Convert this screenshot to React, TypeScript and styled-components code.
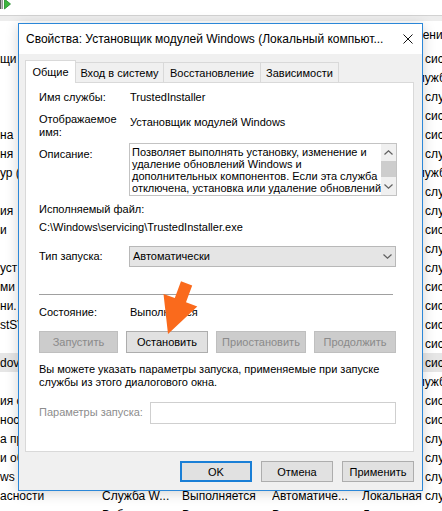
import React from 'react';
import styled, { createGlobalStyle } from 'styled-components';

const GlobalStyle = createGlobalStyle`
  html, body {
    margin: 0;
    padding: 0;
    background: #fff;
  }
  body {
    font-family: "Liberation Sans", Arial, sans-serif;
  }
`;

const Screen = styled.div`
  position: relative;
  width: 442px;
  height: 511px;
  overflow: hidden;
  background: #fff;
  color: #000;
  font-family: "Liberation Sans", Arial, sans-serif;
`;

/* ---------- services window behind the dialog ---------- */

const Toolbar = styled.div`
  height: 15px;
  display: flex;
  align-items: flex-start;
`;

const ToolbarEdge = styled.div`
  height: 5px;
  background: #ededed;
  border-top: 1px solid #d2d2d2;
`;

const ListHeader = styled.div`
  display: flex;
  height: 28px;
  align-items: center;
  font-size: 12px;
  white-space: nowrap;
`;

const Row = styled.div<{ $hl?: boolean }>`
  display: flex;
  height: 19px;
  align-items: center;
  font-size: 12px;
  white-space: nowrap;
  background: ${p => (p.$hl ? '#e6e6e6' : 'transparent')};
`;

const Cell = styled.div<{ $w: number }>`
  flex: 0 0 ${p => p.$w}px;
  overflow: hidden;
`;

/* ---------- dialog ---------- */

const Dialog = styled.div`
  position: absolute;
  left: 18px;
  top: 23px;
  width: 405px;
  height: 468px;
  box-sizing: border-box;
  border: 1px solid #2b87d8;
  background: #f0f0f0;
  box-shadow: 0 2px 12px rgba(0, 0, 0, 0.18);
  display: flex;
  flex-direction: column;
  font-size: 11px;
`;

const TitleBar = styled.div`
  height: 30px;
  flex: 0 0 30px;
  background: #fff;
  display: flex;
  align-items: center;
  padding: 0 9px 0 7px;
  font-size: 12px;
`;

const Title = styled.div`
  flex: 1;
  white-space: nowrap;
  overflow: hidden;
`;

const Body = styled.div`
  flex: 1;
  display: flex;
  flex-direction: column;
  padding: 6px 8px 0 6px;
`;

const TabStrip = styled.div`
  display: flex;
  align-items: flex-end;
  height: 22px;
  position: relative;
  z-index: 1;
`;

const Tab = styled.div<{ $active?: boolean; $w: number }>`
  width: ${p => p.$w}px;
  height: ${p => (p.$active ? 23 : 20)}px;
  margin-bottom: ${p => (p.$active ? -1 : 0)}px;
  box-sizing: border-box;
  border: 1px solid #d9d9d9;
  border-bottom: none;
  background: ${p => (p.$active ? '#fff' : '#f0f0f0')};
  display: flex;
  align-items: center;
  justify-content: center;
  white-space: nowrap;
  & + & {
    margin-left: -1px;
  }
`;

const Panel = styled.div`
  height: 370px;
  box-sizing: border-box;
  border: 1px solid #d9d9d9;
  background: #fff;
  padding: 8px 17px 0 13px;
  display: flex;
  flex-direction: column;
`;

const Field = styled.div<{ $mt?: number }>`
  display: flex;
  margin-top: ${p => p.$mt ?? 0}px;
  line-height: 13px;
`;

const Label = styled.div<{ $w?: number; $pt?: number; $muted?: boolean }>`
  flex: 0 0 ${p => p.$w ?? 91}px;
  padding-top: ${p => p.$pt ?? 0}px;
  color: ${p => (p.$muted ? '#8d8d8d' : '#000')};
  white-space: nowrap;
`;

const Value = styled.div<{ $pt?: number }>`
  padding-top: ${p => p.$pt ?? 0}px;
  white-space: nowrap;
`;

const Line = styled.div<{ $mt?: number }>`
  margin-top: ${p => p.$mt ?? 0}px;
  line-height: 13px;
  white-space: nowrap;
`;

const DescBox = styled.div`
  flex: 1;
  margin-left: -1px;
  height: 53px;
  box-sizing: border-box;
  border: 1px solid #c3c3c3;
  display: flex;
  background: #fff;
`;

const DescText = styled.div`
  flex: 1;
  padding: 2px 0 0 2px;
  line-height: 12px;
  overflow: hidden;
  white-space: nowrap;
`;

const ScrollBar = styled.div`
  width: 15px;
  background: #f0f0f0;
  display: flex;
  flex-direction: column;
`;

const ScrollArrow = styled.div`
  height: 17px;
  display: flex;
  align-items: center;
  justify-content: center;
`;

const ScrollThumb = styled.div`
  height: 16px;
  background: #cdcdcd;
`;

const ScrollTrack = styled.div`
  flex: 1;
`;

const Select = styled.div`
  flex: 1;
  margin-left: -1px;
  height: 21px;
  box-sizing: border-box;
  border: 1px solid #b8b8b8;
  background: #e5e5e5;
  display: flex;
  align-items: center;
  justify-content: space-between;
  padding: 0 3px 0 3px;
`;

const Separator = styled.div<{ $mt: number }>`
  margin-top: ${p => p.$mt}px;
  margin-right: 3px;
  height: 1px;
  background: #a0a0a0;
`;

const ButtonRow = styled.div<{ $mt: number }>`
  display: flex;
  justify-content: space-between;
  margin-top: ${p => p.$mt}px;
`;

const Button = styled.button<{ $w: number; $h?: number; $default?: boolean }>`
  width: ${p => p.$w}px;
  height: ${p => p.$h ?? 22}px;
  box-sizing: border-box;
  margin: 0;
  padding: 0;
  font-family: inherit;
  font-size: 11px;
  color: #000;
  background: #e1e1e1;
  border: ${p => (p.$default ? '2px solid #1a7fd6' : '1px solid #adadad')};
  display: flex;
  align-items: center;
  justify-content: center;
  &:disabled {
    background: #cccccc;
    border-color: #bfbfbf;
    color: #8a8a8a;
  }
`;

const TextInput = styled.div`
  flex: 1;
  height: 22px;
  box-sizing: border-box;
  border: 1px solid #cfcfcf;
  background: #fff;
`;

const Footer = styled.div`
  display: flex;
  justify-content: flex-end;
  gap: 9px;
  margin-top: 9px;
`;

const Overlay = styled.svg`
  position: absolute;
  left: 0;
  top: 0;
  pointer-events: none;
`;

/* ---------- data ---------- */

// name tail (list is scrolled to the right), description, status, startup, log on as
type ListRow = [string, string, string, string, string];

const listRows: ListRow[] = [
  ['щи', '', '', '', 'Локальная система'],
  ['', '', '', '', 'Сетевая служба'],
  ['', '', '', '', 'Локальная служба'],
  ['', '', '', '', 'Локальная система'],
  ['на', '', '', '', 'Локальная система'],
  ['ня', '', '', '', 'Локальная служба'],
  ['ур (', '', '', '', 'Сетевая служба'],
  ['', '', '', '', 'Локальная служба'],
  ['ия', '', '', '', 'Локальная служба'],
  ['и', '', '', '', 'Локальная система'],
  ['', '', '', '', 'Локальная служба'],
  ['уст', '', '', '', 'Локальная служба'],
  ['ми', '', '', '', 'Локальная система'],
  ['ни.', '', '', '', 'Локальная система'],
  ['stSV', '', '', '', 'Локальная система'],
  ['', '', '', '', 'Локальная система'],
  ['dov', '', '', '', 'Локальная система'],
  ['', '', '', '', 'Сетевая служба'],
  ['ия с', '', '', '', 'Локальная система'],
  ['нос', '', '', '', 'Локальная система'],
  ['а пр', '', '', '', 'Локальная служба'],
  ['и об', '', '', '', 'Локальная служба'],
  ['ws (W', '', '', '', 'Локальная служба'],
  ['асности', 'Служба W...', 'Выполняется', 'Автоматиче...', 'Локальная служба'],
  ['', 'Веб-клиент...', 'Выполняется', 'Вручную', 'Локальная служба'],
];

const colWidths = [102, 80, 90, 90, 90];

const description = [
  'Позволяет выполнять установку, изменение и',
  'удаление обновлений Windows и',
  'дополнительных компонентов. Если эта служба',
  'отключена, установка или удаление обновлений',
];

const Chevron: React.FC<{ up?: boolean }> = ({ up }) => (
  <svg width="9" height="5" viewBox="0 0 9 5">
    <polyline
      points={up ? '0.5,4.5 4.5,0.8 8.5,4.5' : '0.5,0.5 4.5,4.2 8.5,0.5'}
      fill="none"
      stroke="#606060"
      strokeWidth="1.2"
    />
  </svg>
);

const App: React.FC = () => (
  <Screen>
    <GlobalStyle />

    <Toolbar>
      <svg width="12" height="10" viewBox="0 0 12 10">
        <rect x="0" y="0" width="1.4" height="9" fill="#5a5a5a" />
        <rect x="2" y="0" width="1" height="9" fill="#9a9a9a" />
        <polygon points="4.5,-1 10.5,4 4.5,9" fill="#3db53d" stroke="#22862a" strokeWidth="0.8" />
      </svg>
    </Toolbar>
    <ToolbarEdge />

    <ListHeader>
      {['', '', '', '', 'Вход от имени'].map((h, i) => (
        <Cell key={i} $w={colWidths[i]}>{h}</Cell>
      ))}
    </ListHeader>
    {listRows.map((r, i) => (
      <Row key={i} $hl={i === 16}>
        {r.map((c, j) => (
          <Cell key={j} $w={colWidths[j]}>{c}</Cell>
        ))}
      </Row>
    ))}

    <Dialog>
      <TitleBar>
        <Title>Свойства: Установщик модулей Windows (Локальный компьют...</Title>
        <svg width="10" height="10" viewBox="0 0 10 10">
          <path d="M0.5 0.5 L9.5 9.5 M9.5 0.5 L0.5 9.5" stroke="#111" strokeWidth="1" />
        </svg>
      </TitleBar>

      <Body>
        <TabStrip>
          <Tab $active $w={51}>Общие</Tab>
          <Tab $w={89}>Вход в систему</Tab>
          <Tab $w={98}>Восстановление</Tab>
          <Tab $w={79}>Зависимости</Tab>
        </TabStrip>

        <Panel>
          <Field>
            <Label>Имя службы:</Label>
            <Value>TrustedInstaller</Value>
          </Field>
          <Field $mt={9}>
            <Label>Отображаемое<br />имя:</Label>
            <Value $pt={3}>Установщик модулей Windows</Value>
          </Field>
          <Field $mt={4}>
            <Label $pt={5}>Описание:</Label>
            <DescBox>
              <DescText>
                {description.map(l => <div key={l}>{l}</div>)}
              </DescText>
              <ScrollBar>
                <ScrollArrow><Chevron up /></ScrollArrow>
                <ScrollThumb />
                <ScrollTrack />
                <ScrollArrow><Chevron /></ScrollArrow>
              </ScrollBar>
            </DescBox>
          </Field>
          <Line $mt={7}>Исполняемый файл:</Line>
          <Line $mt={5}>C:\Windows\servicing\TrustedInstaller.exe</Line>
          <Field $mt={12}>
            <Label $pt={4}>Тип запуска:</Label>
            <Select>
              <span>Автоматически</span>
              <Chevron />
            </Select>
          </Field>

          <Separator $mt={27} />

          <Field $mt={11}>
            <Label>Состояние:</Label>
            <Value>Выполняется</Value>
          </Field>
          <ButtonRow $mt={12}>
            <Button $w={79} disabled>Запустить</Button>
            <Button $w={82}>Остановить</Button>
            <Button $w={90} disabled>Приостановить</Button>
            <Button $w={82} disabled>Продолжить</Button>
          </ButtonRow>

          <Line $mt={10}>Вы можете указать параметры запуска, применяемые при запуске</Line>
          <Line>службы из этого диалогового окна.</Line>

          <Field $mt={13}>
            <Label $w={111} $pt={4} $muted>Параметры запуска:</Label>
            <TextInput />
          </Field>
        </Panel>

        <Footer>
          <Button $w={72} $h={21} $default>OK</Button>
          <Button $w={72} $h={21}>Отмена</Button>
          <Button $w={72} $h={21}>Применить</Button>
        </Footer>
      </Body>
    </Dialog>

    <Overlay width="442" height="511" viewBox="0 0 442 511">
      <polygon
        points="181,281.2 192.2,285.4 186,302.3 197.3,306.4 168,334 163.5,294 174.8,298.1"
        fill="#fa6a1c"
      />
    </Overlay>
  </Screen>
);

export default App;
